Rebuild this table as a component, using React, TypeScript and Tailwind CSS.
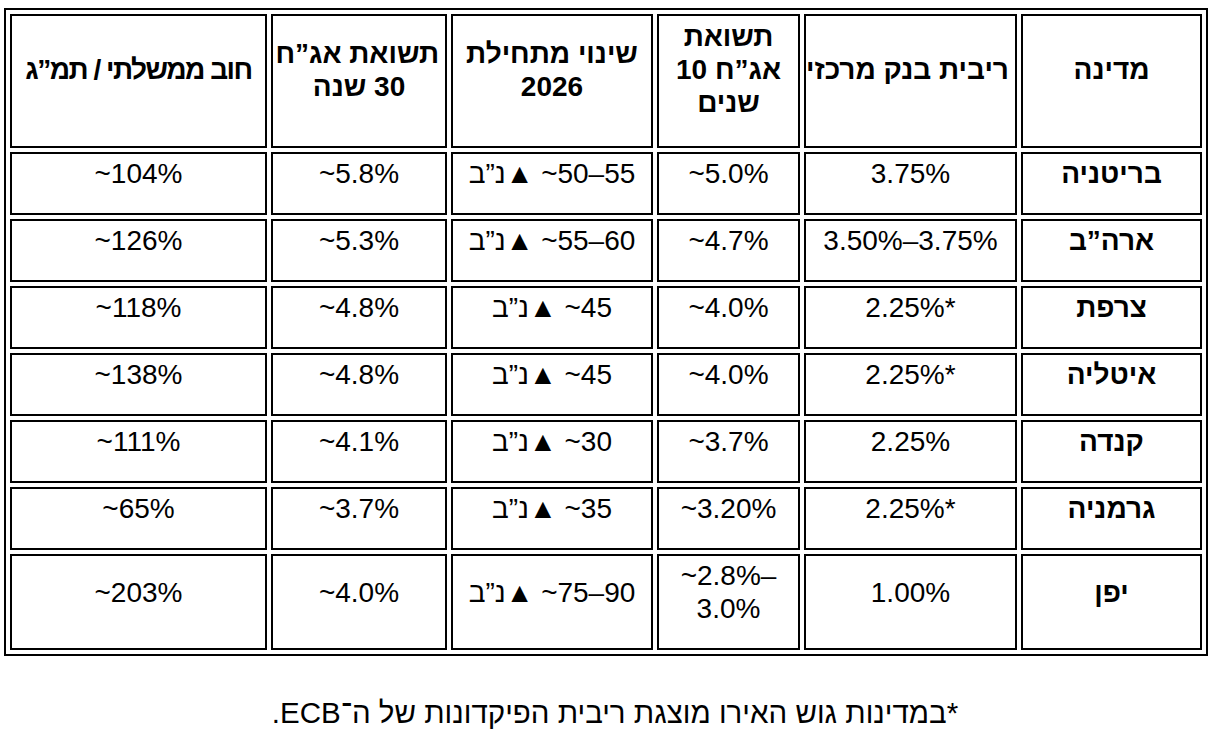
import React from "react";

type Row = {
  country: string;
  rate: string;
  y10: React.ReactNode;
  change: string;
  y30: string;
  debt: string;
};

const rows: Row[] = [
  { country: "בריטניה", rate: "3.75%", y10: "~5.0%", change: "~50–55", y30: "~5.8%", debt: "~104%" },
  { country: "ארה”ב", rate: "3.50%–3.75%", y10: "~4.7%", change: "~55–60", y30: "~5.3%", debt: "~126%" },
  { country: "צרפת", rate: "2.25%*", y10: "~4.0%", change: "~45", y30: "~4.8%", debt: "~118%" },
  { country: "איטליה", rate: "2.25%*", y10: "~4.0%", change: "~45", y30: "~4.8%", debt: "~138%" },
  { country: "קנדה", rate: "2.25%", y10: "~3.7%", change: "~30", y30: "~4.1%", debt: "~111%" },
  { country: "גרמניה", rate: "2.25%*", y10: "~3.20%", change: "~35", y30: "~3.7%", debt: "~65%" },
  {
    country: "יפן",
    rate: "1.00%",
    y10: (
      <>
        ~2.8%–
        <br />
        3.0%
      </>
    ),
    change: "~75–90",
    y30: "~4.0%",
    debt: "~203%",
  },
];

function Th({ children, tight }: { children: React.ReactNode; tight?: boolean }) {
  return (
    <th className="border-2 border-black align-middle text-center font-bold px-[6px] pt-[4px] pb-[7px] whitespace-nowrap">
      <div className={tight ? "leading-[33px] mb-[20px] tracking-[-1.5px]" : "leading-[33px] mb-[20px]"}>
        {children}
      </div>
    </th>
  );
}

function Td({ children, bold }: { children: React.ReactNode; bold?: boolean }) {
  return (
    <td
      className={
        bold
          ? "border-2 border-black align-middle text-center font-bold px-[6px] pt-[3px] pb-[8px] whitespace-nowrap"
          : "border-2 border-black align-middle text-center font-normal px-[6px] pt-[3px] pb-[8px] whitespace-nowrap"
      }
    >
      <div className="leading-[33px] mb-[15px]">{children}</div>
    </td>
  );
}

export default function App() {
  return (
    <div className="min-h-screen w-[1214px] bg-white text-black font-['Liberation_Sans','DejaVu_Sans',sans-serif] text-[28px] pt-[8px] pl-[4px]">
      <table
        dir="rtl"
        className="table-fixed w-[1204px] border-2 border-black border-separate border-spacing-[4px]"
      >
        <colgroup>
          <col className="w-[181px]" />
          <col className="w-[213px]" />
          <col className="w-[143px]" />
          <col className="w-[202px]" />
          <col className="w-[176px]" />
          <col className="w-[257px]" />
        </colgroup>
        <thead>
          <tr>
            <Th>מדינה</Th>
            <Th>ריבית בנק מרכזי</Th>
            <Th>
              תשואת
              <br />
              אג”ח 10
              <br />
              שנים
            </Th>
            <Th>
              שינוי מתחילת
              <br />
              2026
            </Th>
            <Th>
              תשואת אג”ח
              <br />
              30 שנה
            </Th>
            <Th tight>חוב ממשלתי / תמ”ג</Th>
          </tr>
        </thead>
        <tbody>
          {rows.map((r) => (
            <tr key={r.country}>
              <Td bold>{r.country}</Td>
              <Td>
                <span dir="ltr">{r.rate}</span>
              </Td>
              <Td>
                <span dir="ltr">{r.y10}</span>
              </Td>
              <Td>
                <span dir="ltr">
                  <bdi dir="rtl">נ”ב</bdi>▲ {r.change}
                </span>
              </Td>
              <Td>
                <span dir="ltr">{r.y30}</span>
              </Td>
              <Td>
                <span dir="ltr">{r.debt}</span>
              </Td>
            </tr>
          ))}
        </tbody>
      </table>
      <p dir="rtl" className="mt-[40px] text-center text-[29.5px] leading-[33px] pl-[12px]">
        *במדינות גוש האירו מוצגת ריבית הפיקדונות של ה־ECB.
      </p>
    </div>
  );
}
